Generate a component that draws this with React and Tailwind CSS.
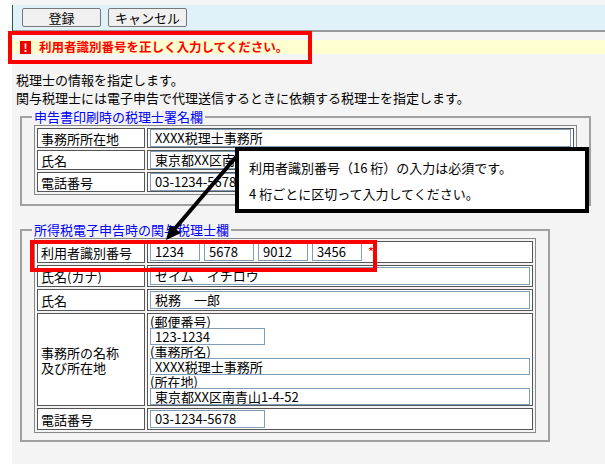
import React from 'react';

const font = { fontFamily: '"Noto Sans CJK JP", "Noto Sans", sans-serif' };

const Field = ({ value, w = 'flex-1', h = 'h-[18px]' }) => (
  <div className={`${w} ${h} border border-[#7f9db9] bg-white px-1 leading-[15px] text-[13px] whitespace-nowrap overflow-hidden`}>{value}</div>
);

const Row = ({ label, children, h = 'h-[22px]', wrap }) => (
  <div className="flex gap-[2px]">
    <div className={`w-[108px] ${h} shrink-0 border border-[#555] px-[3px] flex items-center leading-[15px] bg-white`}>
      {label}
    </div>
    <div className={`flex-1 ${h} border border-[#555] bg-white px-[2px] ${wrap ? '' : 'flex items-center'}`}>{children}</div>
  </div>
);

export default function App() {
  return (
    <div className="relative w-[605px] h-[464px] bg-[#f4f4f4] text-[13px] text-black overflow-hidden" style={font}>
      <div className="absolute left-0 top-0 w-[12px] h-full bg-white" />
      <div className="ml-[12px] pt-[5px]">
        <div className="h-[27px] bg-[#e1f1f9] border-b-2 border-[#999] border-l border-l-[#2d5a3d] flex items-center gap-[7px] pl-[9px]">
          <button className="w-[79px] h-[19px] border border-[#777] rounded-[2px] bg-[#f0f0f0] text-[13px] leading-[17px]">登録</button>
          <button className="w-[79px] h-[19px] border border-[#777] rounded-[2px] bg-[#f0f0f0] text-[13px] leading-[17px]">キャンセル</button>
        </div>
        <div className="h-[20px] relative">
          <div className="absolute left-0 right-0 top-[8px] h-[14px] bg-[#ffffd0]" />
          <div className="absolute left-[-4px] top-[-1px] w-[304px] h-[33px] border-[4px] border-[#ff0000] flex items-center gap-[8px] pl-[8px] z-10">
            <span className="w-[11px] h-[13px] bg-[#e00] text-white text-[11px] font-bold leading-[13px] text-center">!</span>
            <span className="text-[#ff0000] font-bold text-[12.5px] whitespace-nowrap">利用者識別番号を正しく入力してください。</span>
          </div>
        </div>
        <div className="mt-[19px] pl-[4px] leading-[18px]">
          <div>税理士の情報を指定します。</div>
          <div>関与税理士には電子申告で代理送信するときに依頼する税理士を指定します。</div>
        </div>
        <fieldset className="ml-[8px] mt-[2px] w-[571px] h-[97px] border-2 border-[#a0a0a0] px-[12px] pt-0">
          <legend className="text-[#0000ff] px-[2px] ml-[-2px] leading-[15px]">申告書印刷時の税理士署名欄</legend>
          <div className="border border-[#888] p-[2px] flex flex-col gap-[2px] mt-[1px]">
            <Row label="事務所所在地" h="h-[20px]"><Field value=" XXXX税理士事務所" /></Row>
            <Row label="氏名" h="h-[20px]"><Field value="東京都XX区南青山1-4-52" /></Row>
            <Row label="電話番号" h="h-[20px]"><Field value="03-1234-5678" w="w-[120px]" /></Row>
          </div>
        </fieldset>
        <fieldset className="ml-[8px] mt-[16px] w-[530px] h-[220px] border-2 border-[#a0a0a0] px-[12px] pt-0">
          <legend className="text-[#0000ff] px-[2px] ml-[-2px] leading-[15px]">所得税電子申告時の関与税理士欄</legend>
          <div className="border border-[#888] p-[2px] flex flex-col gap-[2px] mt-[1px]">
            <Row label="利用者識別番号">
              <div className="flex items-center gap-[4px]">
                <Field value="1234" w="w-[50px]" />
                <Field value="5678" w="w-[50px]" />
                <Field value="9012" w="w-[50px]" />
                <Field value="3456" w="w-[50px]" />
                <span className="text-[#ff0000] ml-[2px]">*</span>
              </div>
            </Row>
            <Row label="氏名(カナ)"><Field value="ゼイム　イチロウ" /></Row>
            <Row label="氏名"><Field value="税務　一郎" /></Row>
            <Row label={<span>事務所の名称<br />及び所在地</span>} h="h-[93px]" wrap>
              <div className="flex flex-col leading-[13px] pt-[1px]">
                <span>(郵便番号)</span>
                <Field value="123-1234" w="w-[115px]" h="h-[17px]" />
                <span>(事務所名)</span>
                <Field value=" XXXX税理士事務所" h="h-[17px]" />
                <span>(所在地)</span>
                <Field value="東京都XX区南青山1-4-52" h="h-[17px]" />
              </div>
            </Row>
            <Row label="電話番号"><Field value="03-1234-5678" w="w-[115px]" /></Row>
          </div>
        </fieldset>
      </div>

      <div className="absolute left-[30px] top-[240px] w-[347px] h-[32px] border-[4px] border-[#ff0000]" />

      <svg className="absolute left-0 top-0" width="605" height="464">
        <line x1="242" y1="150" x2="172" y2="232" stroke="black" strokeWidth="4" />
        <polygon points="166,240 170,225 181,233" fill="black" />
      </svg>

      <div className="absolute left-[235px] top-[147px] w-[354px] h-[66px] bg-white border-[4px] border-black px-[10px] pt-[4px] leading-[26px] text-[13px]">
        <div>利用者識別番号（16 桁）の入力は必須です。</div>
        <div>4 桁ごとに区切って入力してください。</div>
      </div>
    </div>
  );
}
